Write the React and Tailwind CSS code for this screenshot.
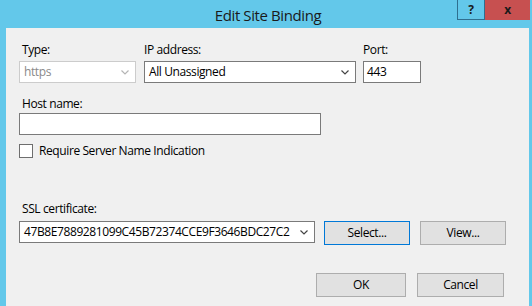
import React from 'react'

// Windows-style "Edit Site Binding" dialog (IIS Manager)

const FONT = "font-['Segoe_UI','Open_Sans',sans-serif] tracking-[-0.4px]"

function Chevron({ className }) {
  return (
    <svg width="8" height="5" viewBox="0 0 8 5" className={className}>
      <path d="M0.5 0.5 L4 4 L7.5 0.5" fill="none" stroke="currentColor" strokeWidth="1.2" />
    </svg>
  )
}

function Label({ children }) {
  return <div className="pl-[3px] h-[16px] leading-[16px] text-[12px] text-black">{children}</div>
}

function DropDown({ value, width, disabled }) {
  return (
    <div
      className={`flex items-center justify-between h-[22px] bg-white pl-[4px] pr-[6px] text-[12px] border ${
        disabled ? 'border-[#cccccc] text-[#8a8a8a]' : 'border-[#7a7a7a] text-black'
      }`}
      style={{ width }}
    >
      <span className="whitespace-nowrap">{value}</span>
      <Chevron className={`shrink-0 ${disabled ? 'text-[#b5b5b5]' : 'text-[#444]'}`} />
    </div>
  )
}

function Button({ children, width, focused }) {
  return (
    <div
      className={`flex items-center justify-center h-[24px] bg-[#e1e1e1] text-[12px] text-black border ${
        focused ? 'border-[#0078d7]' : 'border-[#adadad]'
      }`}
      style={{ width }}
    >
      {children}
    </div>
  )
}

export default function App() {
  return (
    <div className={`w-[532px] h-[306px] overflow-hidden bg-[#63c8ea] flex flex-col ${FONT}`}>
      {/* Title bar */}
      <div className="relative h-[28px] shrink-0 flex items-center justify-center">
        <span className="text-[15px] text-[#1a1a1a] pt-[2px] pl-[4px]">Edit Site Binding</span>
        <div className="absolute top-0 right-[2px] flex">
          <div className="w-[28px] h-[20px] border border-t-0 border-[#2f6f8f] flex items-center justify-center text-[12px] font-bold text-[#1a1a1a]">
            ?
          </div>
          <div className="w-[45px] h-[20px] bg-[#c75050] flex items-center justify-center text-[12px] font-bold text-[#1a1a1a]">
            x
          </div>
        </div>
      </div>

      {/* Client area */}
      <div className="flex-1 ml-[6px] mr-[3px] bg-[#f0f0f0] pl-[13px] pt-[14px]">
        <div className="flex">
          <div className="flex flex-col">
            <Label>Type:</Label>
            <div className="mt-[3px]">
              <DropDown value="https" width={117} disabled />
            </div>
          </div>
          <div className="flex flex-col ml-[8px]">
            <div className="h-[16px] leading-[16px] text-[12px] text-black">IP address:</div>
            <div className="mt-[3px]">
              <DropDown value="All Unassigned" width={212} />
            </div>
          </div>
          <div className="flex flex-col ml-[7px]">
            <div className="h-[16px] leading-[16px] text-[12px] text-black">Port:</div>
            <div className="mt-[3px] w-[58px] h-[22px] border border-[#7a7a7a] bg-white pl-[3px] text-[12px] leading-[20px] text-black">
              443
            </div>
          </div>
        </div>

        <div className="mt-[13px]">
          <Label>Host name:</Label>
          <div className="mt-[1px] w-[302px] h-[22px] border border-[#7a7a7a] bg-white" />
        </div>

        <div className="mt-[9px] flex items-center">
          <div className="w-[14px] h-[14px] border border-[#6e6e6e] bg-white" />
          <span className="ml-[6px] text-[12px] leading-[14px] text-black">Require Server Name Indication</span>
        </div>

        <div className="mt-[43px]">
          <Label>SSL certificate:</Label>
          <div className="mt-[4px] flex items-start">
            <DropDown value="47B8E7889281099C45B72374CCE9F3646BDC27C2" width={296} />
            <div className="ml-[9px]">
              <Button width={86} focused>Select...</Button>
            </div>
            <div className="ml-[10px]">
              <Button width={86}>View...</Button>
            </div>
          </div>
        </div>

        <div className="mt-[28px] flex justify-end pr-[25px] gap-[11px]">
          <Button width={90}>OK</Button>
          <Button width={87}>Cancel</Button>
        </div>
      </div>
    </div>
  )
}
